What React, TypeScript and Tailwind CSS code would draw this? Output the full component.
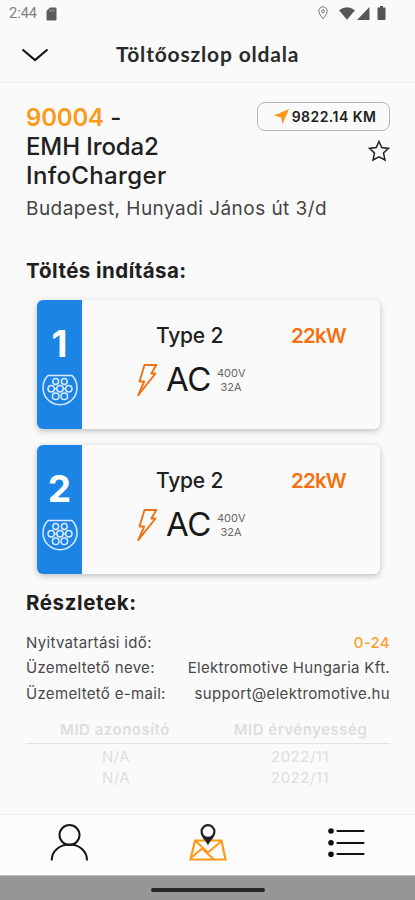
const connectors = [
  { id: 1, type: "Type 2", power: "22kW", voltage: "400V", current: "32A" },
  { id: 2, type: "Type 2", power: "22kW", voltage: "400V", current: "32A" },
];

const midRows = [
  { id: "N/A", valid: "2022/11" },
  { id: "N/A", valid: "2022/11" },
];

function StatusBar() {
  return (
    <div className="flex h-[28px] items-center justify-between pl-[9px] pr-[29px] text-[#626262]">
      <div className="flex items-center">
        <span className="w-[37px] font-['Roboto',sans-serif] text-[14.5px] leading-[28px] text-[#808080]">2:44</span>
        <svg width="11" height="14" viewBox="0 0 11 14" className="-mt-px">
          <path d="M4 0.5H9.5Q10.5 0.5 10.5 1.5V12.5Q10.5 13.5 9.5 13.5H1.5Q0.5 13.5 0.5 12.5V4Z" fill="#5c5c5c" />
          <path d="M4 2.3V4.8M6 2.3V4.8M8 2.3V4.8" stroke="#aaa" strokeWidth="0.9" />
        </svg>
      </div>
      <div className="-mt-[2px] flex items-center">
        <svg width="10" height="14" viewBox="0 0 10 14" fill="none" stroke="#777" className="mr-[11px]">
          <path d="M5 12.8C3.3 10.3 0.8 7.7 0.8 5A4.2 4.2 0 0 1 9.2 5C9.2 7.7 6.7 10.3 5 12.8Z" />
          <circle cx="5" cy="5.2" r="1.4" />
        </svg>
        <svg width="16" height="13" viewBox="0 0 16 13" className="mr-[2px]">
          <path d="M0 3.2Q8 -2.8 16 3.2L8 12.7Z" fill="#575757" />
        </svg>
        <svg width="13" height="13" viewBox="0 0 13 13" className="mr-[7px]">
          <path d="M0 13L12.5 0V13Z" fill="#575757" />
        </svg>
        <svg width="9" height="14" viewBox="0 0 9 14">
          <path d="M3 0H6V1.5H8Q8.5 1.5 8.5 2V13Q8.5 14 7.5 14H1.5Q0.5 14 0.5 13V2Q0.5 1.5 1 1.5H3Z" fill="#555" />
        </svg>
      </div>
    </div>
  );
}

function Type2Icon() {
  return (
    <svg width="36" height="32" viewBox="0 0 36 32" fill="none" stroke="#d9eaff" strokeWidth="1.5">
      <path d="M6 1.5H30C33.4 4.8 35 9 35 13.8A17 17 0 0 1 1 13.8C1 9 2.6 4.8 6 1.5Z" />
      <circle cx="13.7" cy="7.5" r="2.9" />
      <circle cx="22.3" cy="7.5" r="2.9" />
      <circle cx="9.2" cy="14.7" r="3.2" />
      <circle cx="18" cy="14.7" r="3.2" />
      <circle cx="26.8" cy="14.7" r="3.2" />
      <circle cx="13.7" cy="22.2" r="3.3" />
      <circle cx="22.3" cy="22.2" r="3.3" />
      <path d="M12.4 14.7H14.8M21.2 14.7H23.6" />
    </svg>
  );
}

function ConnectorCard({ item }: { item: (typeof connectors)[number] }) {
  return (
    <div className="flex h-[129px] w-[343px] overflow-hidden rounded-[6px] bg-[#fafafa] shadow-[0_2px_6px_rgba(0,0,0,0.24)]">
      <div className="flex w-[45px] shrink-0 flex-col items-center bg-[#1c84e4] pt-[26px] text-white">
        <span className="text-[37px] font-bold leading-[36px]">{item.id}</span>
        <div className="mt-[12px]">
          <Type2Icon />
        </div>
      </div>
      <div className="flex-1 pt-[24px]">
        <div className="flex h-[24px] items-center text-[21px]">
          <span className="ml-[74px] w-[135px] whitespace-nowrap font-medium tracking-[-0.2px] text-[#202020]">{item.type}</span>
          <span className="whitespace-nowrap text-[20.5px] font-semibold tracking-[-0.8px] text-[#f5710f]">{item.power}</span>
        </div>
        <div className="mt-[12px] flex h-[40px] items-center">
          <svg width="22" height="34" viewBox="0 0 22 34" fill="none" stroke="#ee7214" strokeWidth="1.9" strokeLinejoin="round" className="ml-[54px]">
            <path d="M8.5 2H20.3L15.3 10.5H19.5L2.2 32.2L8.2 18.5H3.5Z" />
          </svg>
          <span className="ml-[8px] w-[51px] text-[33px] tracking-[-0.5px] text-[#181818]">AC</span>
          <div className="-mt-px w-[28px] text-center text-[11px] leading-[14px] text-[#666]">
            <div>{item.voltage}</div>
            <div>{item.current}</div>
          </div>
        </div>
      </div>
    </div>
  );
}

function DetailRow({ label, children }: { label: string; children: React.ReactNode }) {
  return (
    <div className="flex h-[25.5px] items-center justify-between whitespace-nowrap text-[15px] tracking-[0.32px] text-[#484848]">
      <span>{label}</span>
      {children}
    </div>
  );
}

function BottomNav() {
  return (
    <div className="grid h-[61px] grid-cols-3 border-t border-[#f0f0f0] bg-[#fcfcfc] pt-[8px]">
      <div className="flex justify-center">
        <svg width="38" height="38" viewBox="0 0 38 38" fill="none" stroke="#161616" strokeWidth="2">
          <circle cx="19.5" cy="12" r="10" />
          <path d="M1.7 37.5C1.7 28 9.5 21.5 19.5 21.5S37 28 37 37.5" />
        </svg>
      </div>
      <div className="flex justify-center pl-px">
        <svg width="38" height="38" viewBox="0 0 38 38" fill="none">
          <path d="M6 17.5H32.5L36.5 36.5H1.5Z" stroke="#ff9816" strokeWidth="2.2" />
          <path d="M2 35L13 25.5L25 36.5M6 17.5L19 29.5L32 18.5" stroke="#ff9816" strokeWidth="2" />
          <path d="M19 22.5C17.5 18 11.5 14 11.5 8.5A7.5 7.5 0 0 1 26.5 8.5C26.5 14 20.5 18 19 22.5Z" fill="#222" />
          <circle cx="19" cy="8.5" r="5.3" fill="#fcfcfc" />
        </svg>
      </div>
      <div className="flex justify-center">
        <svg width="38" height="38" viewBox="0 0 38 38" stroke="#111" strokeWidth="2.2" strokeLinecap="round">
          <path d="M10.5 8H36.5M10.5 20H36.5M10.5 31H36.5" />
          <g fill="#111" stroke="none">
            <circle cx="4" cy="8" r="2.8" />
            <circle cx="4" cy="19.7" r="2.8" />
            <circle cx="4" cy="31.3" r="2.8" />
          </g>
        </svg>
      </div>
    </div>
  );
}

export default function App() {
  return (
    <div className="flex h-[900px] w-[415px] flex-col overflow-hidden bg-[#fafafa] font-['Inter',sans-serif] text-[#202020]">
      <StatusBar />

      {/* Header */}
      <div className="flex h-[55px] items-center border-b-2 border-[#f2f2f2]">
        <svg width="28" height="14" viewBox="0 0 28 14" fill="none" stroke="#151515" strokeWidth="2.2" className="ml-[21px]">
          <path d="M1.5 1.5L14 12L26.5 1.5" />
        </svg>
        <h1 className="-mt-[2px] ml-[67px] whitespace-nowrap font-['Lato',sans-serif] text-[21px] font-bold tracking-[0.83px] text-[#2a2a2a]">Töltőoszlop oldala</h1>
      </div>

      <div className="flex-1 pl-[26px] pr-[25px] pt-[20px]">
        {/* Station name + distance */}
        <div className="flex justify-between">
          <h2 className="w-[200px] whitespace-nowrap text-[24px] font-medium leading-[29px]">
            <span className="font-semibold tracking-[-0.2px] text-[#fb9a1d]">90004</span> -
            <br />
            <span className="tracking-[-0.1px]">EMH Iroda2</span>
            <br />
            <span className="tracking-[0.35px]">InfoCharger</span>
          </h2>
          <div className="-mt-px flex flex-col items-end">
            <div className="flex h-[29px] w-[133px] items-center justify-center gap-[3px] whitespace-nowrap rounded-[8px] border border-[#b5b5b5] pl-[3px] text-[14px] font-semibold tracking-[0.45px]">
              <svg width="15" height="15" viewBox="0 0 15 15" className="-mt-px">
                <path d="M15 0L8.5 15L7 8.5L0 6.5Z" fill="#ff9818" />
              </svg>
              9822.14 KM
            </div>
            <svg width="22" height="22" viewBox="0 0 22 22" fill="none" stroke="#222" strokeWidth="1.5" className="mt-[9px]">
              <path d="M11 1.5L13.8 7.6L20.5 8.4L15.5 13L17 20L11 16.8L5 20L6.5 13L1.5 8.4L8.2 7.6Z" />
            </svg>
          </div>
        </div>
        <p className="mt-[7px] whitespace-nowrap text-[19px] leading-[24px] tracking-[0.46px] text-[#444]">Budapest, Hunyadi János út 3/d</p>

        <h3 className="mt-[38px] whitespace-nowrap text-[20.5px] font-bold leading-[24px] tracking-[0.45px]">Töltés indítása:</h3>
        <div className="ml-[11px] mt-[17px] flex flex-col gap-[16px]">
          {connectors.map((item) => (
            <ConnectorCard key={item.id} item={item} />
          ))}
        </div>

        <h3 className="mt-[17px] whitespace-nowrap text-[20.5px] font-bold leading-[24px] tracking-[0.6px]">Részletek:</h3>
        <div className="mt-[15px]">
          <DetailRow label="Nyitvatartási idő:">
            <span className="font-medium text-[#ff9d2e]">0-24</span>
          </DetailRow>
          <DetailRow label="Üzemeltető neve:">
            <span>Elektromotive Hungaria Kft.</span>
          </DetailRow>
          <DetailRow label="Üzemeltető e-mail:">
            <span>support@elektromotive.hu</span>
          </DetailRow>
        </div>

        {/* MID table */}
        <div className="mt-[12px] whitespace-nowrap text-center text-[15px] tracking-[0.5px] text-[#dedede]">
          <div className="grid h-[25px] grid-cols-[178px_186px] items-center border-b border-[#e3e3e3] font-semibold">
            <span>MID azonosító</span>
            <span className="pl-[7px]">MID érvényesség</span>
          </div>
          <div className="pt-[2px]">
            {midRows.map((row, i) => (
              <div key={i} className="grid h-[21px] grid-cols-[178px_186px] items-center">
                <span className="pl-[2px]">{row.id}</span>
                <span className="pl-[6px]">{row.valid}</span>
              </div>
            ))}
          </div>
        </div>
      </div>

      <BottomNav />
      <div className="flex h-[25px] items-center justify-center border-t border-[#bbb] bg-[#969696] pt-[4px]">
        <div className="h-[4px] w-[114px] rounded-full bg-[#272727]" />
      </div>
    </div>
  );
}
